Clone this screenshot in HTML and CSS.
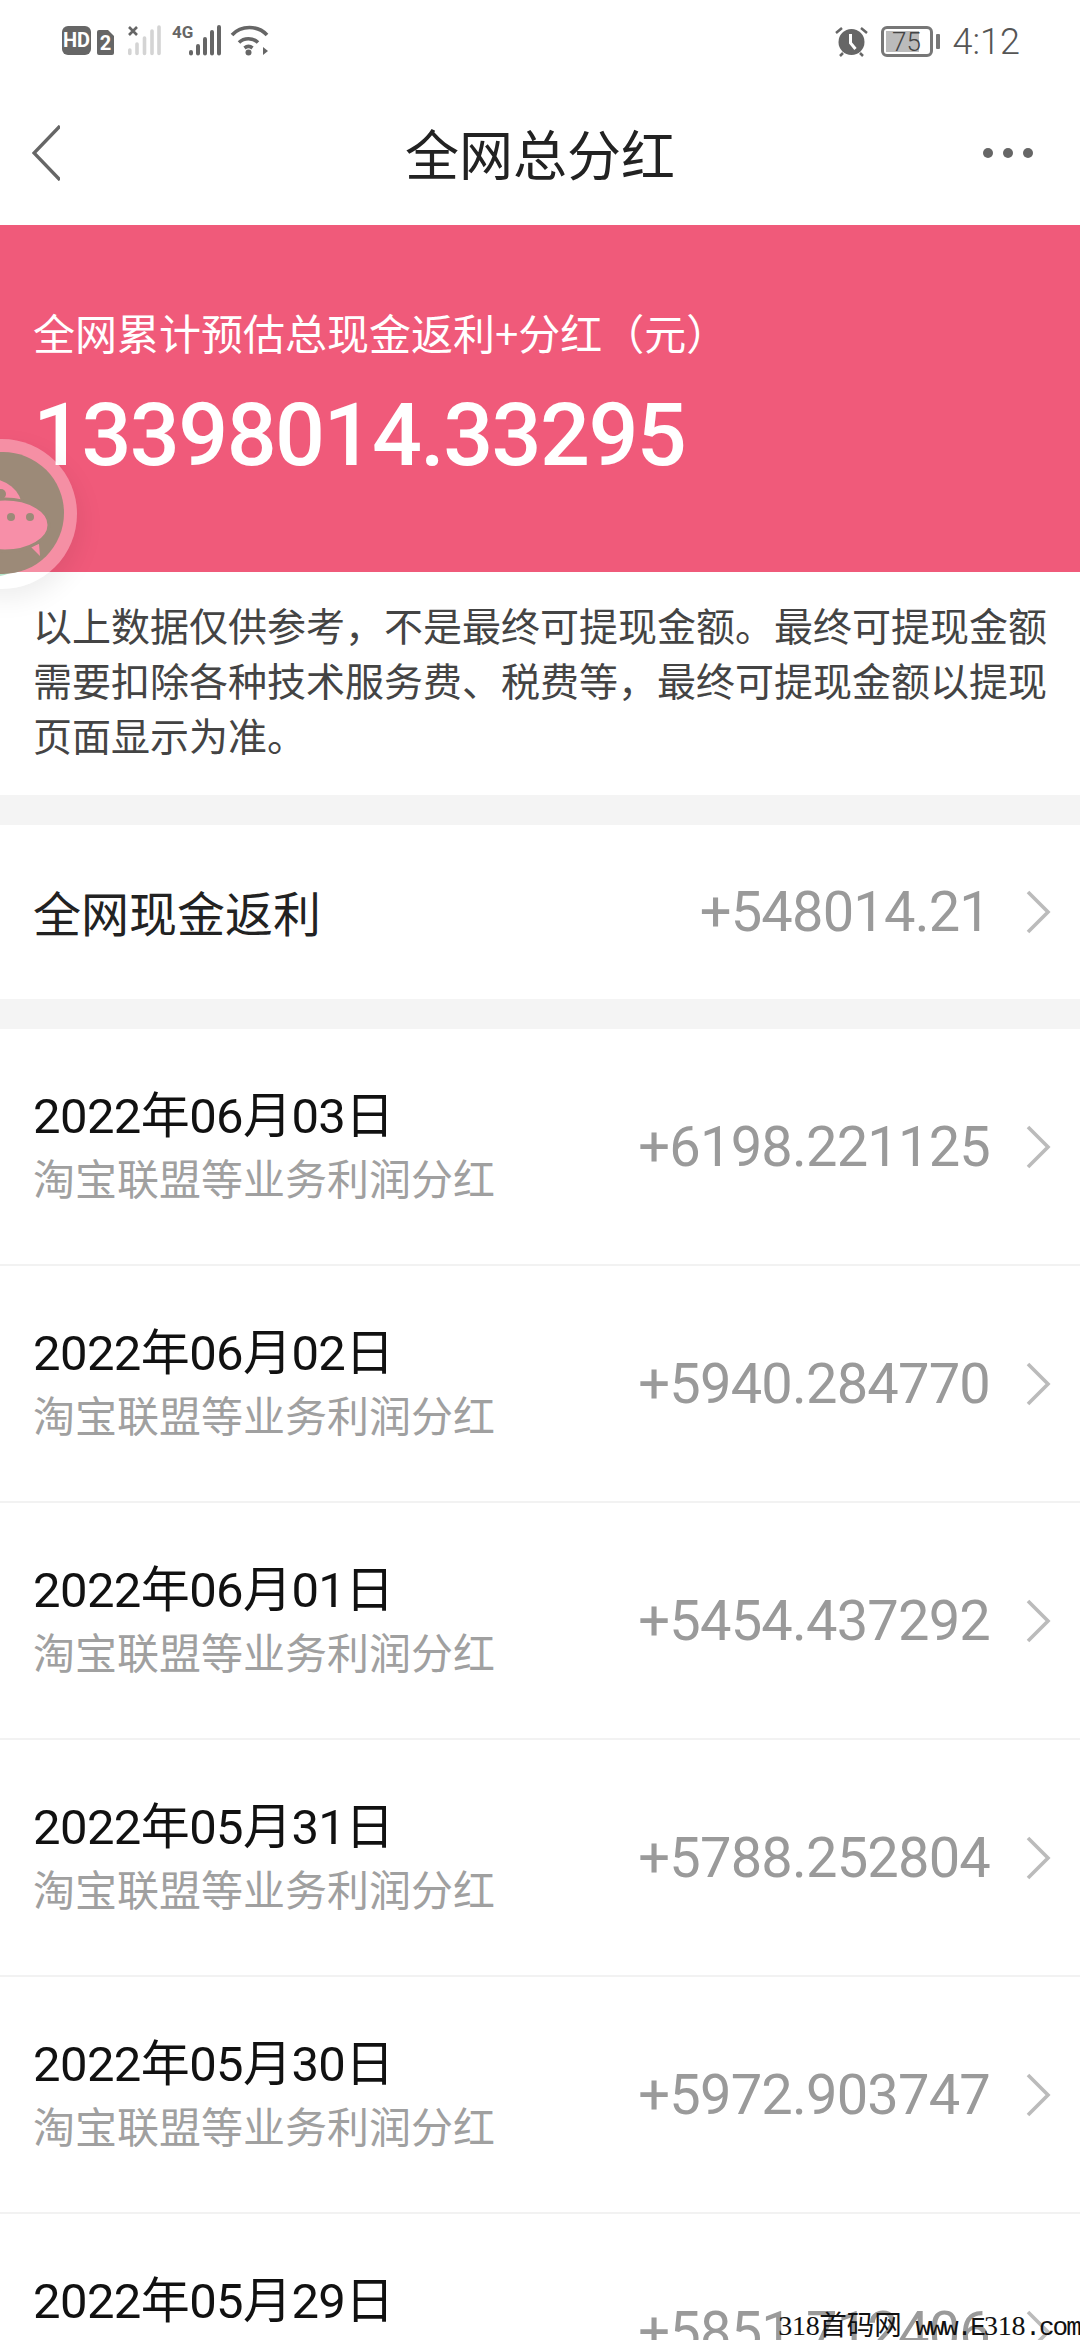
FILE: index.html
```html
<!DOCTYPE html>
<html lang="zh">
<head>
<meta charset="utf-8">
<title>全网总分红</title>
<link rel="stylesheet" href="styles.css">
</head>
<body>
<div class="page">
  <div class="status">
    <div class="status-left">
      <svg class="ic" width="54" height="31" viewBox="0 0 54 31"><rect width="29" height="29" y="1" rx="6" fill="#666"/><text x="14.5" y="22" class="hd">HD</text><path d="M37 5h9l6 6v17a2 2 0 0 1-2 2H37a2 2 0 0 1-2-2V7a2 2 0 0 1 2-2z" fill="#666"/><text x="43.5" y="25" class="hd">2</text></svg>
      <svg class="ic" width="32" height="31" viewBox="0 0 32 31"><path d="M1 2l8 8M9 2l-8 8" stroke="#666" stroke-width="2.6"/><g stroke="#d4d4d4" stroke-width="3.6" stroke-linecap="round"><path d="M1.8 25v3.5M9 19v9.5M16.500 13v15.500M24 6v22.500M31 2v26.500"/></g></svg>
      <svg class="ic" width="47" height="31" viewBox="0 0 47 31"><text x="0" y="13" class="g4">4G</text><g stroke="#666" stroke-width="4" stroke-linecap="round"><path d="M19 27v1.500M26 21v7.500M33 14v14.500M40 7v21.500M47 2v26.500"/></g></svg>
      <svg class="ic" width="37" height="31" viewBox="0 0 37 31"><g fill="none" stroke="#666" stroke-width="3.6"><path d="M1 10C10 0 27 0 36 10"/><path d="M8 17.500c5-5 14-5 19 0"/><path d="M13.500 23c2.500-2 5.500-2 8 0"/></g><circle cx="17.500" cy="27.500" r="3" fill="#666"/><path d="M32 22l5 4-5 4z" fill="#666"/></svg>
    </div>
    <div class="status-right">
      <svg class="ic" width="33" height="31" viewBox="0 0 33 31"><circle cx="16.500" cy="16" r="13" fill="#666"/><path d="M1 7l6-5M32 7l-6-5M5 30l3-3M28 30l-3-3" stroke="#666" stroke-width="2.5"/><path d="M15.500 8v9l5 6" fill="none" stroke="#fff" stroke-width="3"/></svg>
      <div class="batt"><div class="batt-box"><span class="batt-fill"></span><span class="batt-num">75</span></div><span class="batt-tip"></span></div>
      <span class="time">4:12</span>
    </div>
  </div>

  <header class="nav">
    <div class="nav-side"><svg class="back" width="28" height="56" viewBox="0 0 28 56"><path d="M28 1L2 28l26 27" fill="none" stroke="#666" stroke-width="3.4"/></svg></div>
    <h1 class="nav-title">全网总分红</h1>
    <div class="nav-side nav-side-end"><div class="dots"><i></i><i></i><i></i></div></div>
  </header>

  <section class="hero">
    <p class="hero-label">全网累计预估总现金返利+分红（元）</p>
    <p class="hero-amount">13398014.33295</p>
  </section>

  <p class="note">以上数据仅供参考，不是最终可提现金额。最终可提现金额需要扣除各种技术服务费、税费等，最终可提现金额以提现页面显示为准。</p>

  <a class="row row-total">
    <span class="row-name">全网现金返利</span>
    <span class="row-val">+548014.21</span>
    <svg class="chev" width="26" height="44" viewBox="0 0 26 44"><path d="M3 2l20 20L3 42" fill="none" stroke="#bbb" stroke-width="3.6"/></svg>
  </a>

  <div class="list">
    <a class="row item"><span class="item-text"><span class="item-date">2022年06月03日</span><span class="item-sub">淘宝联盟等业务利润分红</span></span><span class="row-val">+6198.221125</span><svg class="chev" width="26" height="44" viewBox="0 0 26 44"><path d="M3 2l20 20L3 42" fill="none" stroke="#bbb" stroke-width="3.6"/></svg></a>
    <a class="row item"><span class="item-text"><span class="item-date">2022年06月02日</span><span class="item-sub">淘宝联盟等业务利润分红</span></span><span class="row-val">+5940.284770</span><svg class="chev" width="26" height="44" viewBox="0 0 26 44"><path d="M3 2l20 20L3 42" fill="none" stroke="#bbb" stroke-width="3.6"/></svg></a>
    <a class="row item"><span class="item-text"><span class="item-date">2022年06月01日</span><span class="item-sub">淘宝联盟等业务利润分红</span></span><span class="row-val">+5454.437292</span><svg class="chev" width="26" height="44" viewBox="0 0 26 44"><path d="M3 2l20 20L3 42" fill="none" stroke="#bbb" stroke-width="3.6"/></svg></a>
    <a class="row item"><span class="item-text"><span class="item-date">2022年05月31日</span><span class="item-sub">淘宝联盟等业务利润分红</span></span><span class="row-val">+5788.252804</span><svg class="chev" width="26" height="44" viewBox="0 0 26 44"><path d="M3 2l20 20L3 42" fill="none" stroke="#bbb" stroke-width="3.6"/></svg></a>
    <a class="row item"><span class="item-text"><span class="item-date">2022年05月30日</span><span class="item-sub">淘宝联盟等业务利润分红</span></span><span class="row-val">+5972.903747</span><svg class="chev" width="26" height="44" viewBox="0 0 26 44"><path d="M3 2l20 20L3 42" fill="none" stroke="#bbb" stroke-width="3.6"/></svg></a>
    <a class="row item"><span class="item-text"><span class="item-date">2022年05月29日</span><span class="item-sub">淘宝联盟等业务利润分红</span></span><span class="row-val">+5851.712406</span><svg class="chev" width="26" height="44" viewBox="0 0 26 44"><path d="M3 2l20 20L3 42" fill="none" stroke="#bbb" stroke-width="3.6"/></svg></a>
  </div>

  <div class="float">
    <div class="float-inner">
      <svg width="64" height="122" viewBox="0 0 64 122"><ellipse cx="-14" cy="55" rx="36" ry="29" fill="#f78fa8"/><circle cx="1" cy="42" r="5" fill="#9c8a78"/><path d="M30 94l10 10-1-12z" fill="#f78fa8"/><ellipse cx="5" cy="73" rx="44" ry="26" fill="#f78fa8" stroke="#9c8a78" stroke-width="3"/><circle cx="11" cy="65" r="4" fill="#9c8a78"/><circle cx="30" cy="65" r="4" fill="#9c8a78"/></svg>
    </div>
  </div>

  <div class="mark"><span class="mark-num">318</span><span class="mark-cjk">首码网</span> www.E<span class="mark-num">318</span>.com</div>
</div>
</body>
</html>
```
FILE: styles.css
```css
* { box-sizing: border-box; }
html, body { margin: 0; padding: 0; background: #fff; }
body { font-family: "Noto Sans CJK SC", Roboto, sans-serif; }
.page { position: relative; width: 1080px; height: 2340px; overflow: hidden; background: #fff; }
p, h1 { margin: 0; }
a { display: flex; color: inherit; text-decoration: none; }

.status { height: 60px; padding: 25px 60px 0 62px; display: flex; justify-content: space-between; align-items: flex-start; }
.status-left { display: flex; align-items: flex-start; gap: 12px; }
.status-right { display: flex; align-items: center; gap: 13px; height: 33px; }
.ic { display: block; overflow: visible; }
.hd { font: 700 20px "Roboto", sans-serif; fill: #fff; text-anchor: middle; }
.g4 { font: 700 17px "Roboto", sans-serif; fill: #666; }
.batt { display: flex; align-items: center; gap: 3px; }
.batt-box { position: relative; width: 52px; height: 31px; border: 3px solid #777; border-radius: 6px; display: flex; align-items: center; justify-content: center; }
.batt-fill { position: absolute; left: 2px; top: 2px; bottom: 2px; width: 33px; background: #bbb; }
.batt-num { position: relative; font: 300 26px "Roboto", sans-serif; color: #444; }
.batt-tip { width: 4px; height: 15px; background: #777; border-radius: 1px; }
.time { font: 300 36px "Roboto", sans-serif; color: #555; }

.nav { height: 165px; padding: 20px 47px 0; display: flex; align-items: center; }
.nav-side { flex: 1 1 0; display: flex; }
.nav-side-end { justify-content: flex-end; }
.back { margin-left: -15px; }
.nav-title { font-size: 54px; font-weight: 400; color: #222; line-height: 1; }
.dots { display: flex; gap: 10px; }
.dots i { width: 10px; height: 10px; border-radius: 50%; background: #666; }

.hero { height: 347px; background: #f05a7a; padding: 79px 33px 0; color: #fff; }
.hero-label { font-size: 42px; line-height: 56px; }
.hero-amount { font: 500 88px/100px "Roboto", sans-serif; letter-spacing: -1.6px; margin-top: 25px; }

.note { height: 253px; padding: 25px 20px 0 33px; font-size: 39px; line-height: 55px; color: #444; border-bottom: 30px solid #f4f4f4; }

.row { display: flex; align-items: center; background: #fff; padding: 0 29px 0 33px; }
.row-total { height: 204px; border-bottom: 30px solid #f4f4f4; }
.row-name { flex: 1; font-size: 48px; color: #222; padding-bottom: 3px; }
.row-val { font: 400 56px "Roboto", sans-serif; letter-spacing: -0.8px; color: #9a9a9a; margin-right: 35px; }
.chev { flex: none; }
.item { height: 237px; border-bottom: 2px solid #f2f2f2; }
.item-text { flex: 1; display: flex; flex-direction: column; }
.item-date { font: 400 49px/60px "Roboto", "Noto Sans CJK SC", sans-serif; letter-spacing: -0.6px; color: #111; }
.item-sub { font-size: 42px; line-height: 60px; color: #a0a0a0; }

.float { position: absolute; left: -73px; top: 439px; width: 150px; height: 150px; border-radius: 50%; background: rgba(255,255,255,.32); box-shadow: 4px 10px 26px rgba(0,0,0,.07); display: flex; align-items: center; justify-content: center; }
.float-inner { width: 122px; height: 122px; margin-top: -3px; margin-left: 2px; border-radius: 50%; background: #9c8a78; box-shadow: -14px 5px 0 -2px #b5e6cc; display: flex; justify-content: flex-end; }
.float-inner svg { display: block; flex: none; clip-path: circle(61px at 3px 61px); }

.mark { position: absolute; right: 0; bottom: -4px; font: 400 26px/32px "Liberation Mono", monospace; letter-spacing: -1.9px; color: #111; white-space: pre; }
.mark-num { font: 400 28px/32px "Liberation Serif", serif; letter-spacing: -0.3px; }
.mark-cjk { font: 400 27.500px/32px "Noto Sans CJK SC", sans-serif; letter-spacing: 0; }
```
